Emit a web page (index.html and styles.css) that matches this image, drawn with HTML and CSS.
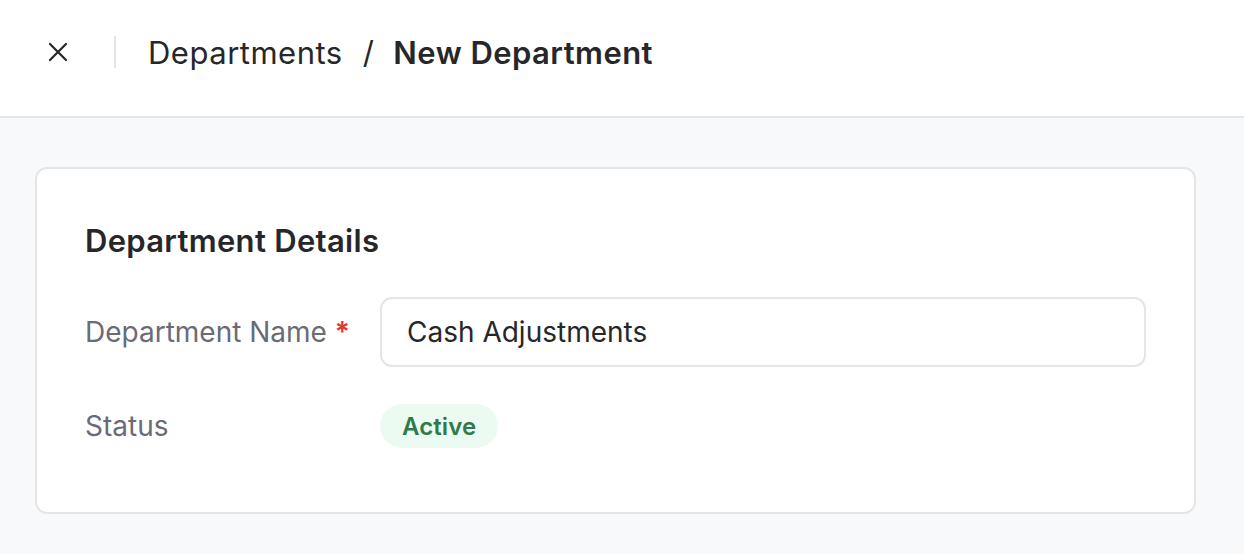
FILE: index.html
```html
<!DOCTYPE html>
<html lang="en">
<head>
<meta charset="utf-8">
<link rel="stylesheet" href="styles.css">
</head>
<body>
<header class="topbar">
  <button class="close-btn" aria-label="Close">
    <svg width="22" height="22" viewBox="0 0 22 22"><path d="M3 3 L19 19 M19 3 L3 19" stroke="#27272a" stroke-width="2.2" stroke-linecap="round" fill="none"/></svg>
  </button>
  <span class="divider"></span>
  <nav class="crumbs">
    <span class="crumb">Departments</span>
    <span class="sep">/</span>
    <span class="crumb current">New Department</span>
  </nav>
</header>
<main class="content">
  <section class="card">
    <h2 class="card-title">Department Details</h2>
    <div class="field">
      <label class="label">Department Name <span class="req">*</span></label>
      <div class="input">Cash Adjustments</div>
    </div>
    <div class="field status-row">
      <span class="label">Status</span>
      <span class="pill">Active</span>
    </div>
  </section>
</main>
</body>
</html>
```
FILE: styles.css
```css
* { box-sizing: border-box; }
html, body { margin: 0; padding: 0; }
body {
  font-family: Inter, "Noto Sans", sans-serif;
  background: #f8f9fb;
  color: #27272a;
  width: 1244px;
  height: 554px;
  overflow: hidden;
}
.topbar {
  height: 118px;
  background: #ffffff;
  border-bottom: 2px solid #e4e5e9;
  display: flex;
  align-items: center;
  padding-left: 47px;
  padding-bottom: 12px;
}
.close-btn {
  border: 0;
  background: transparent;
  padding: 0;
  width: 22px;
  height: 22px;
  display: flex;
  align-items: center;
  justify-content: center;
}
.divider {
  width: 2px;
  height: 32px;
  background: #e4e4e7;
  margin-left: 45px;
  margin-right: 32px;
}
.crumbs {
  display: flex;
  align-items: center;
  font-size: 31px;
  letter-spacing: 0.5px;
  color: #27272a;
}
.sep { margin: 0 19px 0 20px; }
.current { font-weight: 600; letter-spacing: 0.45px; }
.content {
  padding: 49px 48px 0 35px;
}
.card {
  background: #ffffff;
  border: 2px solid #e4e5e9;
  border-radius: 12px;
  padding: 52px 48px 64px 48px;
}
.card-title {
  margin: 0 0 36px 0;
  font-size: 31px;
  font-weight: 600;
  letter-spacing: 0.3px;
  line-height: 40px;
  color: #27272a;
}
.field {
  display: flex;
  align-items: center;
}
.label {
  width: 295px;
  font-size: 28px;
  color: #6b6b76;
}
.req { color: #e5362b; font-weight: 600; }
.input {
  flex: 1;
  height: 70px;
  border: 2px solid #e4e5e9;
  border-radius: 12px;
  padding: 0 25px;
  display: flex;
  align-items: center;
  font-size: 28px;
  color: #27272a;
}
.status-row { margin-top: 37px; }
.pill {
  background: #ecfbf1;
  color: #2e7a4b;
  font-weight: 600;
  font-size: 24px;
  letter-spacing: 0.1px;
  height: 44px;
  padding: 0 22px;
  border-radius: 22px;
  display: flex;
  align-items: center;
}
```
